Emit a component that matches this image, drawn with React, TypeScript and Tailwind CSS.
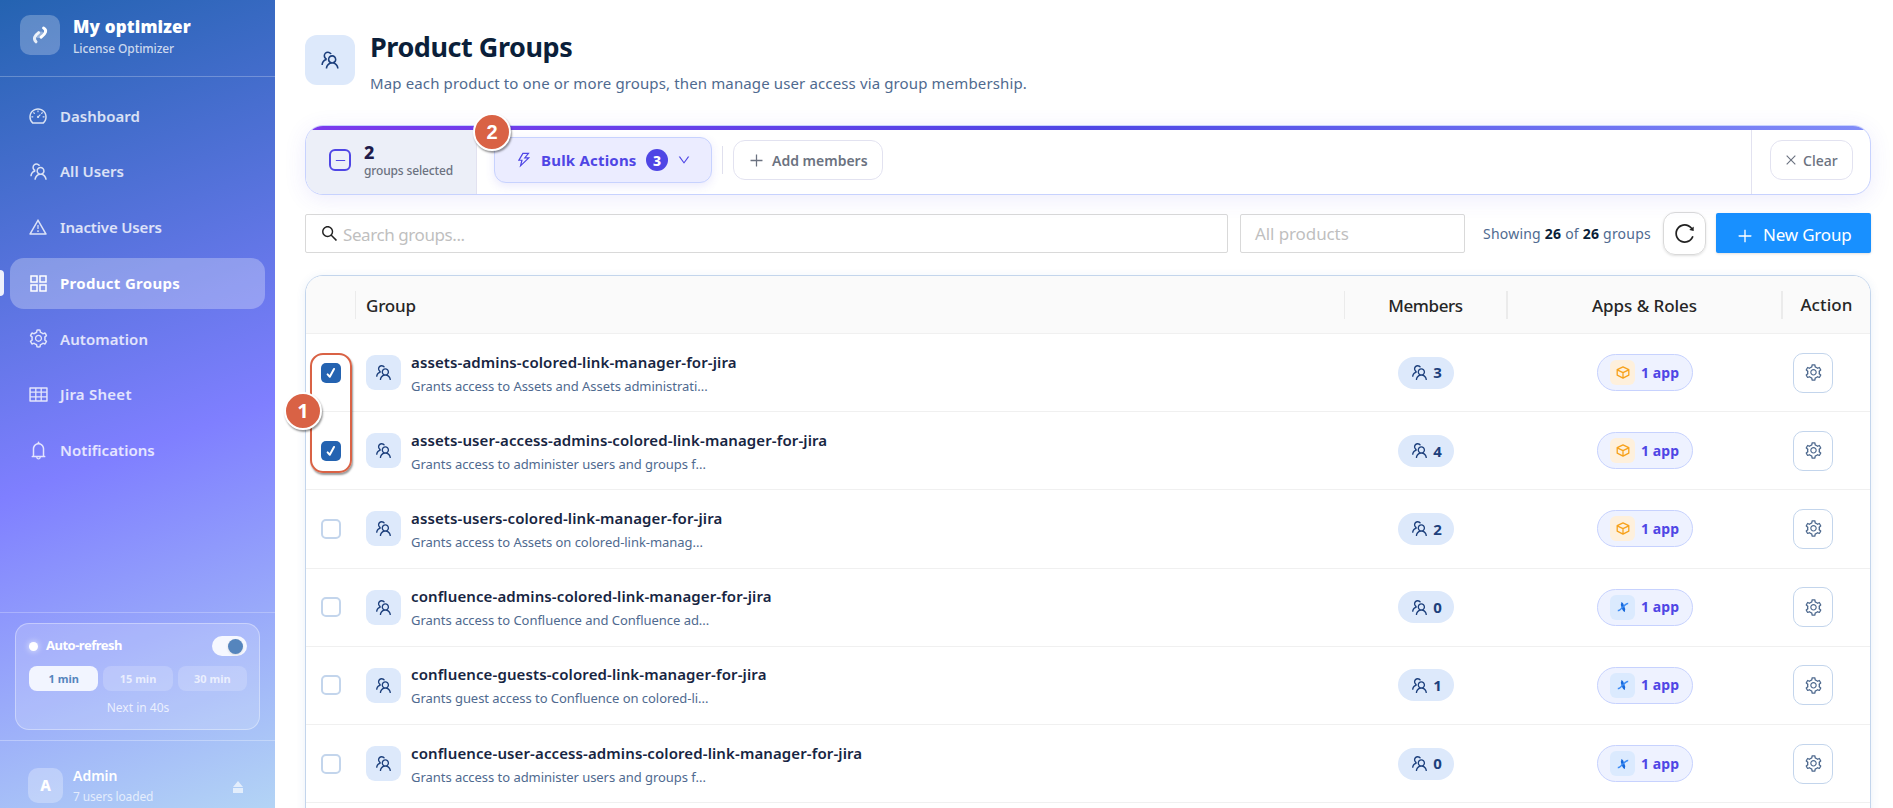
import React from "react";
import {
  AiOutlineAppstore, AiOutlineBell, AiOutlineClose, AiOutlineDashboard, AiOutlineDown, AiOutlineMinus,
  AiOutlinePlus, AiOutlineReload, AiOutlineSearch, AiOutlineSetting, AiOutlineTable, AiOutlineTeam, AiOutlineThunderbolt, AiOutlineWarning,
} from "react-icons/ai";

const nav = [
  { label: "Dashboard", icon: AiOutlineDashboard, size: 20, w: "tracking-[0.02px]" },
  { label: "All Users", icon: AiOutlineTeam, size: 21, w: "tracking-[0.03px]" },
  { label: "Inactive Users", icon: AiOutlineWarning, size: 20, w: "tracking-[-0.15px]" },
  { label: "Product Groups", icon: AiOutlineAppstore, size: 23, w: "tracking-[0.3px]", active: true },
  { label: "Automation", icon: AiOutlineSetting, size: 21, w: "tracking-[0.07px]" },
  { label: "Jira Sheet", icon: AiOutlineTable, size: 21, w: "tracking-[0.25px]" },
  { label: "Notifications", icon: AiOutlineBell, size: 21, w: "tracking-[0.05px]" },
];

const rows = [
  { name: "assets-admins-colored-link-manager-for-jira", desc: "Grants access to Assets and Assets administrati...", n: 3, jira: true, on: true },
  { name: "assets-user-access-admins-colored-link-manager-for-jira", desc: "Grants access to administer users and groups f...", n: 4, jira: true, on: true },
  { name: "assets-users-colored-link-manager-for-jira", desc: "Grants access to Assets on colored-link-manag...", n: 2, jira: true },
  { name: "confluence-admins-colored-link-manager-for-jira", desc: "Grants access to Confluence and Confluence ad...", n: 0 },
  { name: "confluence-guests-colored-link-manager-for-jira", desc: "Grants guest access to Confluence on colored-li...", n: 1 },
  { name: "confluence-user-access-admins-colored-link-manager-for-jira", desc: "Grants access to administer users and groups f...", n: 0 },
];

function Sidebar() {
  return (
    <aside className="flex h-full w-[275px] shrink-0 flex-col bg-[linear-gradient(160deg,#2463b1_0%,#7f7fff_55%,#b3d4f5_100%)] text-white">
      <div className="flex h-[77px] shrink-0 items-start gap-[13px] border-b border-white/25 pt-[15px] pl-5">
        <div className="flex size-10 items-center justify-center rounded-[10px] bg-white/25">
          <svg width="18" height="20" viewBox="0 0 18 20" fill="none" strokeLinecap="round" strokeLinejoin="round">
            <path d="M7 10.5 L10 9" stroke="white" strokeOpacity=".35" strokeWidth="5" />
            <path d="M12.6 3 C16.2 5 14.8 8.8 10 12.2" stroke="white" strokeWidth="3" />
            <path d="M7.6 7.6 C3.4 10.6 2.2 14 5 16.8" stroke="white" strokeOpacity=".85" strokeWidth="3" />
          </svg>
        </div>
        <div className="pt-px">
          <div className="text-[17px] leading-[22px] font-black tracking-[0.15px]">My optimizer</div>
          <div className="text-xs leading-[22px] font-medium tracking-[-0.1px] text-white/75">License Optimizer</div>
        </div>
      </div>
      <nav className="flex flex-col gap-[4.7px] pt-[13.5px]">
        {nav.map(({ label, icon: Icon, size, active, w }) => (
          <div key={label} className="flex items-center">
            <span className={active ? "h-[26px] w-1 rounded-r bg-white/90" : "w-1"} />
            <div className={"ml-1.5 flex h-[51px] w-[255px] items-center gap-3 rounded-[14px] pl-[18px] text-[15px] " + (active ? "bg-white/28 font-bold text-white" : "font-semibold text-white/80")}>
              <span className="flex size-5 shrink-0 items-center justify-center"><Icon size={size} className="shrink-0" /></span>
              <span className={w}>{label}</span>
            </div>
          </div>
        ))}
      </nav>
      <div className="mt-auto h-[196px] shrink-0 border-t border-white/25 px-[15px] pt-2.5">
        <div className="h-[107px] rounded-[14px] border border-white/35 bg-white/18 pt-3 pr-3 pl-[13px]">
          <div className="flex h-5 items-center">
            <span className="size-[9px] rounded-full bg-white shadow-[0_0_6px_rgba(255,255,255,.8)]" />
            <span className="ml-2 text-[13px] font-bold tracking-[-0.5px]">Auto-refresh</span>
            <span className="ml-auto flex h-5 w-[35px] items-center justify-end rounded-full bg-[#f6f8ff] pr-1">
              <span className="size-[15px] rounded-full bg-[#5585bd] shadow-sm" />
            </span>
          </div>
          <div className="mt-2.5 grid grid-cols-3 gap-[5px] text-center text-[11px] leading-[25px] font-bold">
            <span className="rounded-lg bg-[#f2f5ff] text-[#5585bd]">1 min</span>
            <span className="rounded-lg bg-white/18 text-white/70">15 min</span>
            <span className="rounded-lg bg-white/18 text-white/70">30 min</span>
          </div>
          <div className="mt-[7px] text-center text-xs leading-5 text-white/75">Next in 40s</div>
        </div>
      </div>
      <div className="-mt-[68px] flex h-[68px] shrink-0 border-t border-white/30 pt-[27px] pr-8 pl-7">
        <div className="flex size-[35px] items-center justify-center rounded-[10px] bg-white/28 text-[15px] font-extrabold">A</div>
        <div className="ml-2.5">
          <div className="text-sm leading-4 font-semibold">Admin</div>
          <div className="mt-[3px] text-xs leading-5 tracking-[-0.15px] text-white/70">7 users loaded</div>
        </div>
        <svg className="mt-[13px] ml-auto" width="10" height="12" viewBox="0 0 10 12" fill="white" fillOpacity=".65"><path d="M5 0L10 6H0zM0 7h10v5H0z" /></svg>
      </div>
    </aside>
  );
}

function BulkBar() {
  return (
    <section className="relative mt-[34px] h-[70px] shrink-0 rounded-[18px] border border-[#c7d2fe] bg-white shadow-[0_4px_22px_rgba(79,70,229,.10)]">
      <div className="flex h-full flex-col overflow-hidden rounded-[17px]">
        <div className="h-1 shrink-0 bg-[linear-gradient(90deg,#7c3aed,#4f46e5_50%,#818cf8)]" />
        <div className="flex min-h-0 grow items-stretch">
          <div className="flex w-[171px] items-center border-r border-[#e2e2f0] bg-[#eceff8] pb-1 pl-[23px]">
            <span className="flex size-[22px] items-center justify-center rounded-md border-2 border-[#4f46e5] text-[#4f46e5]"><AiOutlineMinus size={13} /></span>
            <div className="ml-[13px] pt-[3px]">
              <div className="text-lg leading-[18px] font-extrabold text-[#1e1b4b]">2</div>
              <div className="text-xs leading-5 font-medium tracking-[-0.15px] text-[#6b7280]">groups selected</div>
            </div>
          </div>
          <div className="flex grow items-start pt-[7px] pl-[17px]">
            <div className="flex h-[46px] w-[218px] items-center rounded-xl border border-[#c7d2fe] bg-[#ebecff] pl-5 text-[#4f46e5] shadow-[0_3px_10px_rgba(79,70,229,.12)]">
              <AiOutlineThunderbolt size={18} />
              <span className="ml-2 w-24 text-[15px] font-bold tracking-[0.2px] whitespace-nowrap">Bulk Actions</span>
              <span className="ml-[9px] flex size-[22px] items-center justify-center rounded-full bg-[#4f46e5] text-[14px] font-extrabold text-white">3</span>
              <AiOutlineDown className="ml-[9px]" size={14} />
            </div>
            <span className="mt-[9px] ml-2.5 h-7 w-px bg-[#e0e0ee]" />
            <div className="mt-[3px] ml-2.5 flex h-10 w-[150px] items-center gap-[7px] rounded-xl border border-[#e2e2f0] pl-3.5 text-[14px] font-semibold text-[#6b7280]">
              <AiOutlinePlus size={17} /><span className="whitespace-nowrap">Add members</span>
            </div>
          </div>
          <div className="flex w-[119px] items-start border-l border-[#e2e2f0] pt-2.5 pl-[18px]">
            <div className="flex h-10 w-[83px] items-center gap-[5px] rounded-xl border border-[#e2e2f0] pl-[13px] text-[14px] font-medium text-[#6b7280]">
              <AiOutlineClose size={14} />Clear
            </div>
          </div>
        </div>
      </div>
      <div className="absolute -top-[13px] left-[167px] flex size-[38px] items-center justify-center rounded-full border-2 border-white bg-[#d96245] font-['Liberation_Sans',sans-serif] text-[20px] font-bold text-white shadow-[1px_2px_2px_rgba(0,0,0,.4)]">2</div>
    </section>
  );
}

function Confluence() {
  return (
    <svg width="12" height="10" viewBox="0 0 12 10" fill="none" stroke="#1668dc">
      <path d="M4.2 1.4 C6 1.8 5.8 8.2 8 8.6" strokeWidth="3" />
      <path d="M.8 8.6 C4 9 7.5 1 11.2 1.4" strokeWidth="1.5" stroke="#3b8cf5" />
    </svg>
  );
}

function Cube() {
  return (
    <svg width="14" height="13" viewBox="0 0 14 13" fill="none" stroke="#f7a11a" strokeWidth="1.3" strokeLinejoin="round">
      <path d="M7 .9L12.8 3.6V9.2L7 12.1L1.2 9.2V3.6ZM1.2 3.8L7 6.7L12.8 3.8M7 6.7V12" />
    </svg>
  );
}

const cols = "grid grid-cols-[50px_989px_163px_275px_89px]";

function GroupTable() {
  return (
    <section className="relative mt-5 h-[640px] shrink-0 rounded-[18px] border border-[#c3d5ec] bg-white shadow-[0_2px_10px_rgba(36,99,177,.10)]">
      <div className={cols + " h-[58px] items-center rounded-t-[17px] border-b border-[#f0f0f0] bg-[#fafafa] text-[17px] font-medium text-[#262626]"}>
        <span className="h-7 border-r border-[#ebebeb]" />
        <span className="h-7 border-r border-[#ebebeb] pl-2.5 leading-[29px] tracking-[-0.2px]">Group</span>
        <span className="h-7 border-r-2 border-[#ebebeb] text-center leading-[29px] tracking-[-0.4px]">Members</span>
        <span className="h-7 border-r-2 border-[#ebebeb] text-center leading-[29px] tracking-[-0.05px]">Apps &amp; Roles</span>
        <span className="pt-px pr-0.5 text-center tracking-[0.1px]">Action</span>
      </div>
      {rows.map((r) => (
        <div key={r.name} className={cols + " h-[78.2px] items-center border-b border-[#f0f0f0]"}>
          <div className="pl-[15px]">
            {r.on ? (
              <span className="flex size-5 items-center justify-center rounded-[5px] bg-[#2463b1]">
                <svg width="10" height="12" viewBox="0 0 10 12" fill="none" stroke="white" strokeWidth="2" strokeLinecap="round" strokeLinejoin="round"><path d="M1.6 7.4L3.8 9.8L8 2" /></svg>
              </span>
            ) : (
              <span className="block size-5 rounded-[5px] border-2 border-[#c3d5ec]" />
            )}
          </div>
          <div className="flex items-center pl-2.5">
            <span className="flex size-[35px] items-center justify-center rounded-[9px] bg-[#dde9fb] text-[#1c3f7c]"><AiOutlineTeam size={19} /></span>
            <div className="ml-2.5 pt-px">
              <div className="text-[15px] leading-[22px] font-semibold tracking-[0.11px] text-[#172542]">{r.name}</div>
              <div className="mt-[3px] text-[13px] leading-5 tracking-[-0.04px] text-[#4f6a8f]">{r.desc}</div>
            </div>
          </div>
          <div className="flex justify-center pr-px">
            <span className="flex h-8 w-14 items-center justify-center gap-1 rounded-full bg-[#dde9fb] text-[15px] font-bold text-[#1c3f7c]"><AiOutlineTeam size={19} />{r.n}</span>
          </div>
          <div className="flex justify-center pr-px">
            <span className="flex h-[37px] w-24 items-center gap-1.5 rounded-full border border-[#c7d2fe] bg-[#eef2ff] pl-3 text-sm font-bold text-[#4f46e5]">
              <span className={"flex size-[25px] items-center justify-center rounded-md " + (r.jira ? "bg-[#fef0dc]" : "bg-[#dbeafe]")}>{r.jira ? <Cube /> : <Confluence />}</span>
              <span className="tracking-[0.1px] whitespace-nowrap">1 app</span>
            </span>
          </div>
          <div className="pl-2.5">
            <span className="flex size-10 items-center justify-center rounded-[10px] border border-[#c3d5ec] text-[#4f6a8f]"><AiOutlineSetting size={19} /></span>
          </div>
        </div>
      ))}
      <div className="absolute top-[77px] left-1 h-[120px] w-[42px] rounded-[13px] border-2 border-[#d96245] shadow-[1px_2px_2px_rgba(0,0,0,.4)]" />
      <div className="absolute top-[116px] -left-[22px] flex size-[38px] items-center justify-center rounded-full border-2 border-white bg-[#d96245] font-['Noto_Sans',sans-serif] text-[20px] font-bold text-white shadow-[1px_2px_2px_rgba(0,0,0,.4)]">1</div>
    </section>
  );
}

export default function App() {
  return (
    <div className="flex h-[808px] w-[1893px] overflow-hidden bg-white font-['Noto_Sans',sans-serif]">
      <Sidebar />
      <main className="flex w-[1618px] flex-col pr-[22px] pl-[30px]">
        <header className="flex h-[91px] shrink-0 items-start pt-[30px]">
          <div className="mt-[5px] flex size-[50px] items-center justify-center rounded-xl bg-[#dde9fb] text-[#1c3f7c]"><AiOutlineTeam size={22} /></div>
          <div className="ml-[15px]">
            <h1 className="text-[27px] leading-[34px] font-bold tracking-[-0.45px] text-[#0b1f3a]">Product Groups</h1>
            <p className="mt-[7px] text-[15px] leading-6 tracking-[0.13px] text-[#4f6a8f]">Map each product to one or more groups, then manage user access via group membership.</p>
          </div>
        </header>
        <BulkBar />
        <div className="mt-[17px] flex h-[43px] shrink-0 items-start">
          <div className="mt-0.5 flex h-[39px] w-[923px] items-center gap-1 rounded-xs border border-[#d9d9d9] pl-3.5">
            <AiOutlineSearch size={19} color="#222" />
            <span className="pt-0.5 text-[17px] tracking-[-0.42px] text-[#bfbfbf]">Search groups...</span>
          </div>
          <div className="mt-0.5 ml-3 h-[39px] w-[225px] rounded-xs border border-[#d9d9d9] pl-3.5 text-[17px] leading-[37px] tracking-[-0.1px] text-[#bfbfbf]">All products</div>
          <div className="ml-[18px] w-[180px] text-sm leading-[43px] tracking-[0.22px] whitespace-nowrap text-[#4f6a8f]">Showing <b className="text-[#0b1f3a]">26</b> of <b className="text-[#0b1f3a]">26</b> groups</div>
          <div className="flex size-[43px] items-center justify-center rounded-xl border border-[#d9d9d9] shadow-sm"><AiOutlineReload size={23} color="#222" /></div>
          <div className="mt-px ml-2.5 flex h-10 w-[155px] items-center rounded-xs bg-[#1890ff] pt-1 pl-5 text-[17px] text-white shadow-sm">
            <AiOutlinePlus size={18} className="mt-0.5" /><span className="ml-[9px] tracking-[-0.2px] whitespace-nowrap">New Group</span>
          </div>
        </div>
        <GroupTable />
      </main>
    </div>
  );
}
